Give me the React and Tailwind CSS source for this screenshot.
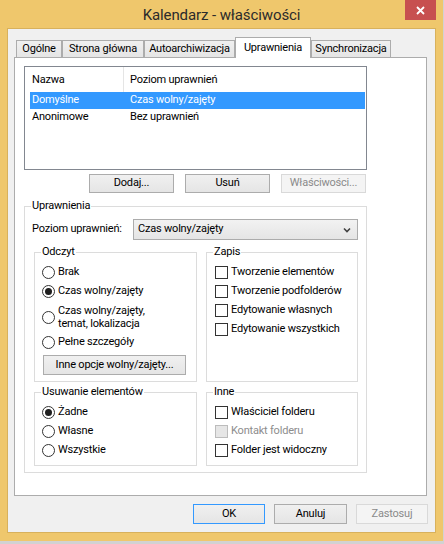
import React from 'react'

function Radio({ checked }) {
  return (
    <span className="flex h-[13px] w-[13px] shrink-0 items-center justify-center rounded-full border border-[#333333] bg-white">
      {checked && <span className="h-[7px] w-[7px] rounded-full bg-[#1f1f1f]" />}
    </span>
  )
}

function Check({ disabled }) {
  return disabled ? (
    <span className="h-[13px] w-[13px] shrink-0 border border-[#bcbcbc] bg-[#e6e6e6]" />
  ) : (
    <span className="h-[13px] w-[13px] shrink-0 border border-[#333333] bg-white" />
  )
}

function RadioRow({ checked, children }) {
  return (
    <div className="flex h-[19px] items-center gap-[3px]">
      <Radio checked={checked} />
      <span>{children}</span>
    </div>
  )
}

function CheckRow({ disabled, children }) {
  return (
    <div className={disabled ? 'flex h-[19px] items-center gap-[3px] text-[#8d8d8d]' : 'flex h-[19px] items-center gap-[3px]'}>
      <Check disabled={disabled} />
      <span>{children}</span>
    </div>
  )
}

function Button({ className, disabled, primary, children }) {
  let look = 'border-[#acacac] bg-linear-to-b from-[#f0f0f0] to-[#e5e5e5] text-black'
  if (primary) look = 'border-[#3399ff] bg-linear-to-b from-[#f0f0f0] to-[#e5e5e5] text-black'
  if (disabled) look = 'border-[#d9d9d9] bg-[#f4f4f4] text-[#8a8a8a]'
  return (
    <div className={'flex items-center justify-center border ' + look + ' ' + className}>
      {children}
    </div>
  )
}

function Group({ title, className, children }) {
  return (
    <fieldset className={'border border-[#dcdcdc] ' + className}>
      <legend className="ml-[6px] px-px leading-[14px]">{title}</legend>
      {children}
    </fieldset>
  )
}

const tabs = [
  { label: 'Ogólne', w: 'w-[46px]' },
  { label: 'Strona główna', w: 'w-[82px]' },
  { label: 'Autoarchiwizacja', w: 'w-[91px]' },
  { label: 'Uprawnienia', w: 'w-[76px]', active: true },
  { label: 'Synchronizacja', w: 'w-[80px]' },
]

export default function App() {
  return (
    <div className="h-[544px] w-[444px] overflow-hidden bg-[#d2d2d2] font-['Roboto',sans-serif] text-[11px] tracking-[-0.2px] text-black">
      <div className="flex h-[541px] w-[443px] flex-col bg-[#efc76c]">
        {/* pasek tytułu */}
        <div className="grid h-[28px] grid-cols-[1fr_auto_1fr]">
          <div />
          <div className="pt-px text-[15px] leading-[28px] tracking-[-0.1px] text-[#2b2b2b]">Kalendarz - właściwości</div>
          <div className="flex justify-end pr-[7px]">
            <div className="flex h-[20px] w-[31px] items-center justify-center bg-[#c75050]">
              <svg width="9" height="9" viewBox="0 0 9 9">
                <path d="M1 1L8 8M8 1L1 8" stroke="white" strokeWidth="1.8" />
              </svg>
            </div>
          </div>
        </div>

        {/* obszar klienta */}
        <div className="ml-[7px] flex h-[505px] w-[429px] flex-col border border-[#d8b15c] bg-[#f0f0f0]">
          {/* zakładki */}
          <div className="relative z-10 mt-[8px] flex items-end pl-[8px]">
            {tabs.map((t) =>
              t.active ? (
                <div key={t.label} className={'-mb-px flex h-[21px] items-center justify-center border border-b-0 border-[#acacac] bg-white ' + t.w}>
                  {t.label}
                </div>
              ) : (
                <div key={t.label} className={'flex h-[17px] items-center justify-center border border-b-0 border-[#acacac] bg-linear-to-b from-[#f0f0f0] to-[#e5e5e5] ' + t.w}>
                  {t.label}
                </div>
              )
            )}
          </div>

          {/* panel zakładki */}
          <div className="ml-[6px] flex h-[439px] w-[413px] flex-col border border-[#acacac] bg-white">
            <div className="ml-[9px] mt-[8px] h-[104px] w-[343px] border border-[#828790] bg-white">
              <div className="flex h-[25px] items-center pt-[2px]">
                <div className="w-[98px] pl-[7px]">Nazwa</div>
                <div className="-mt-[2px] h-[25px] w-px bg-[#e5e5e5]" />
                <div className="pl-[6px]">Poziom uprawnień</div>
              </div>
              <div className="ml-[5px] mr-px flex h-[17px] items-center bg-[#3399ff] text-white">
                <div className="w-[100px] pl-[2px]">Domyślne</div>
                <div>Czas wolny/zajęty</div>
              </div>
              <div className="ml-[5px] mr-px flex h-[17px] items-center">
                <div className="w-[100px] pl-[2px]">Anonimowe</div>
                <div>Bez uprawnień</div>
              </div>
            </div>

            <div className="ml-[74px] mt-[4px] flex gap-[11px]">
              <Button className="h-[19px] w-[85px]">Dodaj...</Button>
              <Button className="h-[19px] w-[85px]">Usuń</Button>
              <Button className="h-[19px] w-[85px]" disabled>Właściwości...</Button>
            </div>

            <Group title="Uprawnienia" className="ml-[9px] mt-[6px] w-[343px]">
              <div className="mt-[6px] flex h-[21px] items-center pl-[7px]">
                <div className="w-[101px]">Poziom uprawnień:</div>
                <div className="flex h-[21px] w-[225px] items-center justify-between border border-[#acacac] bg-linear-to-b from-[#f2f2f2] to-[#e5e5e5] pl-[4px] pr-[6px]">
                  <span>Czas wolny/zajęty</span>
                  <svg width="8" height="6" viewBox="0 0 8 6">
                    <path d="M1 1.5L4 4.5L7 1.5" fill="none" stroke="#404040" strokeWidth="1.6" />
                  </svg>
                </div>
              </div>

              <div className="mt-[5px] flex gap-[9px] pl-[9px]">
                <Group title="Odczyt" className="h-[137px] w-[163px]">
                  <div className="mt-[4px] flex flex-col pl-[7px]">
                    <RadioRow>Brak</RadioRow>
                    <RadioRow checked>Czas wolny/zajęty</RadioRow>
                    <div className="flex h-[32px] items-center gap-[3px]">
                      <Radio />
                      <span className="leading-[13px]">
                        Czas wolny/zajęty,
                        <br />
                        temat, lokalizacja
                      </span>
                    </div>
                    <RadioRow>Pełne szczegóły</RadioRow>
                    <Button className="ml-px mt-[3px] h-[20px] w-[143px]">Inne opcje wolny/zajęty...</Button>
                  </div>
                </Group>
                <Group title="Zapis" className="h-[137px] w-[152px]">
                  <div className="mt-[4px] flex flex-col pl-[8px]">
                    <CheckRow>Tworzenie elementów</CheckRow>
                    <CheckRow>Tworzenie podfolderów</CheckRow>
                    <CheckRow>Edytowanie własnych</CheckRow>
                    <CheckRow>Edytowanie wszystkich</CheckRow>
                  </div>
                </Group>
              </div>

              <div className="mb-[6px] mt-[3px] flex gap-[9px] pl-[9px]">
                <Group title="Usuwanie elementów" className="h-[81px] w-[163px]">
                  <div className="mt-[4px] flex flex-col pl-[7px]">
                    <RadioRow checked>Żadne</RadioRow>
                    <RadioRow>Własne</RadioRow>
                    <RadioRow>Wszystkie</RadioRow>
                  </div>
                </Group>
                <Group title="Inne" className="h-[81px] w-[152px]">
                  <div className="mt-[4px] flex flex-col pl-[8px]">
                    <CheckRow>Właściciel folderu</CheckRow>
                    <CheckRow disabled>Kontakt folderu</CheckRow>
                    <CheckRow>Folder jest widoczny</CheckRow>
                  </div>
                </Group>
              </div>
            </Group>
          </div>

          {/* przyciski dialogu */}
          <div className="mt-[8px] flex justify-end gap-[9px] pr-[7px]">
            <Button className="h-[20px] w-[72px]" primary>OK</Button>
            <Button className="h-[20px] w-[73px]">Anuluj</Button>
            <Button className="h-[20px] w-[72px]" disabled>Zastosuj</Button>
          </div>
        </div>
      </div>
    </div>
  )
}
